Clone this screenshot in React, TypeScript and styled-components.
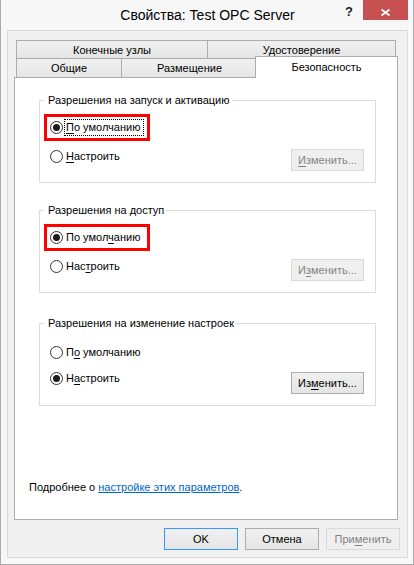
import React from 'react';
import styled, { createGlobalStyle } from 'styled-components';

const Global = createGlobalStyle`
  html, body { margin: 0; padding: 0; background: #ffffff; }
  body {
    font-family: "Liberation Sans", Arial, sans-serif;
    font-size: 11px;
    color: #000;
  }
  * { box-sizing: border-box; }
`;

const Window = styled.div`
  width: 414px;
  height: 565px;
  background: #f7f7f7;
  border: 1px solid #ababab;
  border-top: none;
  padding: 0 5px 6px 6px;
  display: flex;
  flex-direction: column;
`;

const TitleBar = styled.div`
  height: 30px;
  flex: none;
  display: grid;
  grid-template-columns: 1fr;
  grid-template-rows: 30px;
`;

const Title = styled.div`
  grid-area: 1 / 1;
  align-self: center;
  text-align: center;
  font-size: 14px;
  line-height: 16px;
  color: #000;
`;

const Controls = styled.div`
  grid-area: 1 / 1;
  justify-self: end;
  align-self: start;
  display: flex;
`;

const HelpButton = styled.div`
  width: 28px;
  height: 20px;
  display: flex;
  align-items: center;
  justify-content: center;
  font-weight: bold;
  font-size: 13px;
  color: #1e1e1e;
  padding-top: 3px;
`;

const CloseButton = styled.div`
  width: 45px;
  height: 20px;
  background: #c75050;
  display: flex;
  align-items: center;
  justify-content: center;
  padding-top: 4px;
`;

const Frame = styled.div`
  flex: 1;
  border: 1px solid #dadada;
  background: #f0f0f0;
  padding: 9px 9px 7px 6px;
  display: flex;
  flex-direction: column;
`;

const Tabs = styled.div`
  padding-left: 2px;
  flex: none;
`;

const TabRow = styled.div<{ $h: number }>`
  display: flex;
  align-items: flex-end;
  height: ${p => p.$h}px;
`;

const Tab = styled.div<{ $w: number; $h: number; $active?: boolean; $shift?: number }>`
  width: ${p => p.$w}px;
  height: ${p => p.$h}px;
  flex: none;
  border: 1px solid #acacac;
  border-bottom: none;
  background: ${p => (p.$active ? '#ffffff' : 'linear-gradient(#f0f0f0, #e5e5e5)')};
  margin-left: ${p => p.$shift ?? 0}px;
  margin-bottom: ${p => (p.$active ? -1 : 0)}px;
  position: relative;
  z-index: ${p => (p.$active ? 2 : 0)};
  display: flex;
  align-items: center;
  justify-content: center;
  line-height: 14px;
  padding-bottom: ${p => (p.$active ? 2 : 0)}px;
`;

const Panel = styled.div`
  flex: 1;
  background: #ffffff;
  border: 1px solid #acacac;
  padding: 14px 0 24px 14px;
  display: flex;
  flex-direction: column;
  position: relative;
  z-index: 1;
`;

const Groups = styled.div`
  margin: 0 21px 0 10px;
  display: flex;
  flex-direction: column;
`;

const GroupBox = styled.fieldset<{ $top: number; $pt: number }>`
  margin: ${p => p.$top}px 0 0 0;
  min-width: 0;
  border: 1px solid #dcdcdc;
  padding: ${p => p.$pt}px 11px 11px 10px;
  display: flex;
  flex-direction: column;
`;

const Legend = styled.legend`
  padding: 0 2px 0 4px;
  margin-left: -6px;
  line-height: 16px;
  font-size: 11px;
  color: #000;
`;

const OptionRow = styled.div<{ $gap?: number }>`
  display: flex;
  align-items: flex-start;
  margin-top: ${p => p.$gap ?? 0}px;
`;

const RadioLine = styled.div`
  position: relative;
  height: 20px;
  display: flex;
  align-items: center;
`;

const RadioCircle = styled.span<{ $checked?: boolean }>`
  width: 13px;
  height: 13px;
  flex: none;
  border-radius: 50%;
  border: 1px solid #333333;
  background: #ffffff;
  display: flex;
  align-items: center;
  justify-content: center;
  &::after {
    content: '';
    width: 7px;
    height: 7px;
    border-radius: 50%;
    background: ${p => (p.$checked ? '#1c1c1c' : 'transparent')};
  }
`;

const RadioLabel = styled.span<{ $focus?: boolean }>`
  margin-left: 1px;
  padding: 0 3px 0 1px;
  line-height: 15px;
  border: 1px dotted ${p => (p.$focus ? '#000' : 'transparent')};
  position: relative;
  z-index: 1;
`;

const Highlight = styled.span`
  position: absolute;
  left: -6px;
  top: -3px;
  width: 106px;
  height: 27px;
  border: 3px solid #ff0000;
  pointer-events: none;
`;

const Spacer = styled.div`
  flex: 1;
`;

const Button = styled.div<{ $disabled?: boolean; $default?: boolean; $w?: number; $h?: number; $mt?: number }>`
  width: ${p => p.$w ?? 73}px;
  height: ${p => p.$h ?? 22}px;
  margin-top: ${p => p.$mt ?? 0}px;
  flex: none;
  display: flex;
  align-items: center;
  justify-content: center;
  border: 1px solid ${p => (p.$disabled ? '#d9d9d9' : p.$default ? '#3399ff' : '#acacac')};
  background: ${p => (p.$disabled ? '#efefef' : 'linear-gradient(#f0f0f0, #e5e5e5)')};
  color: ${p => (p.$disabled ? '#838383' : '#000')};
  line-height: 14px;
`;

const Footer = styled.div`
  margin-top: auto;
  line-height: 16px;
`;

const Link = styled.a`
  color: #0066cc;
  text-decoration: underline;
`;

const ButtonRow = styled.div`
  flex: none;
  display: flex;
  justify-content: flex-end;
  gap: 7px;
  margin: 8px -2px 0 0;
`;

const U = styled.span`
  text-decoration: underline;
  text-underline-offset: 2px;
`;

const Acc: React.FC<{ text: string; i: number | null }> = ({ text, i }) =>
  i === null ? (
    <>{text}</>
  ) : (
    <>
      {text.slice(0, i)}
      <U>{text[i]}</U>
      {text.slice(i + 1)}
    </>
  );

type GroupData = {
  title: string;
  top: number;
  pt: number;
  gap: number;
  btnTop: number;
  defAcc: number;
  customAcc: number;
  btnAcc: number;
  checked: 'def' | 'custom';
  focus: boolean;
  highlight: boolean;
  disabled: boolean;
};

const groups: GroupData[] = [
  {
    title: 'Разрешения на запуск и активацию',
    top: 0,
    pt: 9,
    gap: 9,
    btnTop: 3,
    defAcc: 0,
    customAcc: 0,
    btnAcc: 0,
    checked: 'def',
    focus: true,
    highlight: true,
    disabled: true,
  },
  {
    title: 'Разрешения на доступ',
    top: 19,
    pt: 9,
    gap: 9,
    btnTop: 3,
    defAcc: 7,
    customAcc: 3,
    btnAcc: 1,
    checked: 'def',
    focus: false,
    highlight: true,
    disabled: true,
  },
  {
    title: 'Разрешения на изменение настроек',
    top: 22,
    pt: 11,
    gap: 6,
    btnTop: 4,
    defAcc: 1,
    customAcc: 1,
    btnAcc: 2,
    checked: 'custom',
    focus: false,
    highlight: false,
    disabled: false,
  },
];

const Group: React.FC<{ g: GroupData }> = ({ g }) => (
  <GroupBox $top={g.top} $pt={g.pt}>
    <Legend>{g.title}</Legend>
    <OptionRow>
      <RadioLine>
        {g.highlight && <Highlight />}
        <RadioCircle $checked={g.checked === 'def'} />
        <RadioLabel $focus={g.focus}>
          <Acc text="По умолчанию" i={g.defAcc} />
        </RadioLabel>
      </RadioLine>
    </OptionRow>
    <OptionRow $gap={g.gap}>
      <RadioLine>
        <RadioCircle $checked={g.checked === 'custom'} />
        <RadioLabel>
          <Acc text="Настроить" i={g.customAcc} />
        </RadioLabel>
      </RadioLine>
      <Spacer />
      <Button $disabled={g.disabled} $mt={g.btnTop}>
        <Acc text="Изменить..." i={g.btnAcc} />
      </Button>
    </OptionRow>
  </GroupBox>
);

export default function App() {
  return (
    <>
      <Global />
      <Window>
        <TitleBar>
          <Title>Свойства: Test OPC Server</Title>
          <Controls>
            <HelpButton>?</HelpButton>
            <CloseButton>
              <svg width="9" height="7" viewBox="0 0 9 7">
                <path d="M0.5 0.5 L8.5 6.5 M8.5 0.5 L0.5 6.5" stroke="#ffffff" strokeWidth="1.8" fill="none" />
              </svg>
            </CloseButton>
          </Controls>
        </TitleBar>
        <Frame>
          <Tabs>
            <TabRow $h={18}>
              <Tab $w={192} $h={18}>Конечные узлы</Tab>
              <Tab $w={189} $h={18} $shift={-1}>Удостоверение</Tab>
            </TabRow>
            <TabRow $h={19}>
              <Tab $w={106} $h={19}>Общие</Tab>
              <Tab $w={137} $h={19} $shift={-1}>Размещение</Tab>
              <Tab $w={143} $h={22} $shift={-3} $active>
                Безопасность
              </Tab>
            </TabRow>
          </Tabs>
          <Panel>
            <Groups>
              {groups.map(g => (
                <Group key={g.title} g={g} />
              ))}
            </Groups>
            <Footer>
              Подробнее о <Link>настройке этих параметров</Link>.
            </Footer>
          </Panel>
          <ButtonRow>
            <Button $w={74} $default>
              OK
            </Button>
            <Button $w={74}>Отмена</Button>
            <Button $w={74} $disabled>
              <Acc text="Применить" i={3} />
            </Button>
          </ButtonRow>
        </Frame>
      </Window>
    </>
  );
}
